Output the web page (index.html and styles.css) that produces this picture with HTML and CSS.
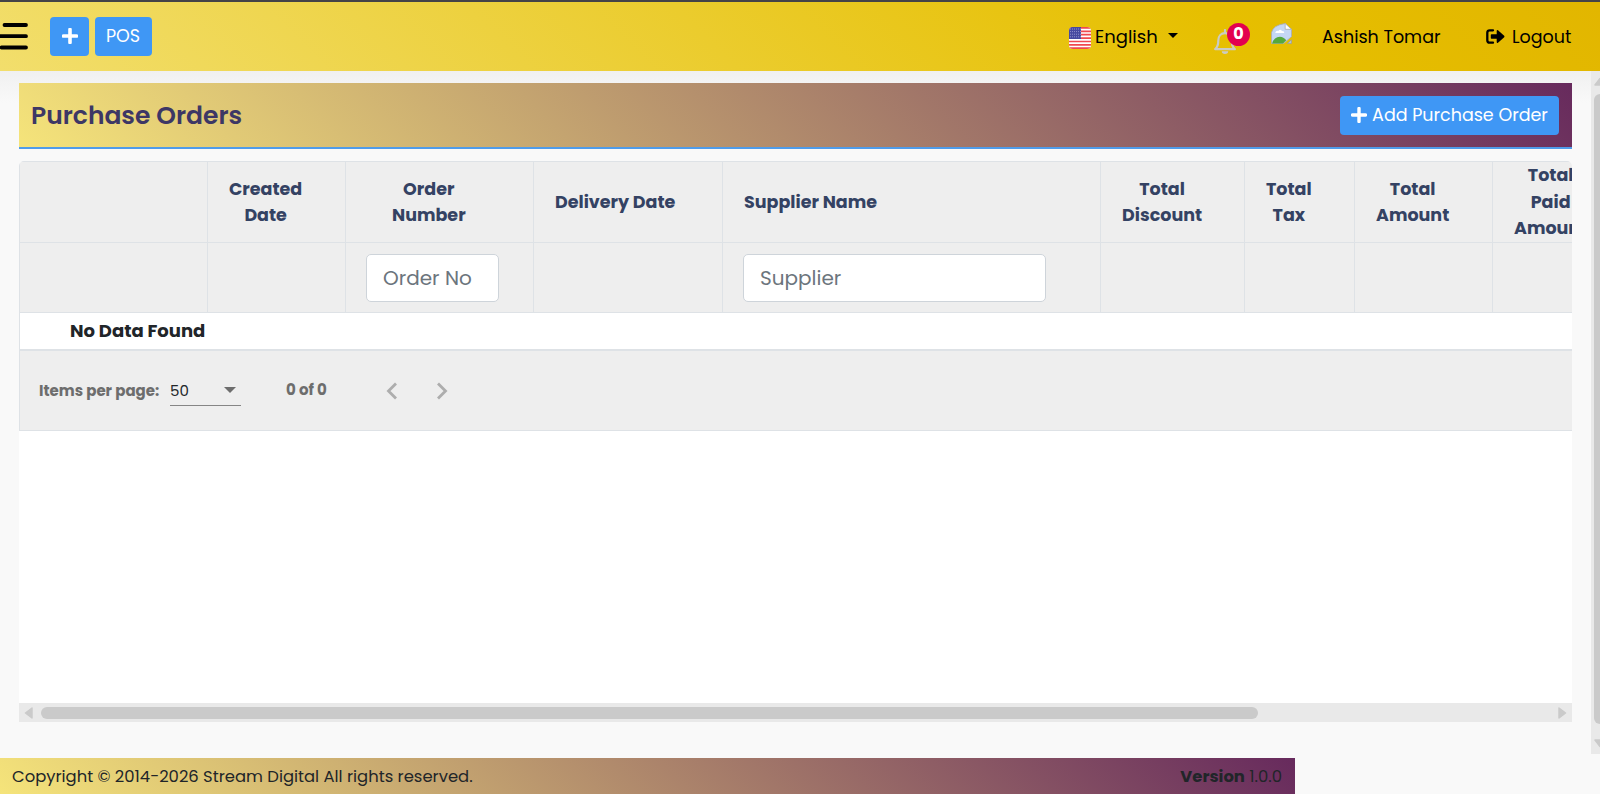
FILE: index.html
```html
<!DOCTYPE html>
<html lang="en">
<head>
  <meta charset="utf-8">
  <title>Purchase Orders</title>
  <link rel="stylesheet" href="styles.css">
</head>
<body>

  <header class="navbar">
    <svg class="menu-toggle" viewBox="0 0 28 28" width="28" height="28">
      <path d="M4.5 2H26M-2 13.2H26M1.5 24.5H26" stroke="#000" stroke-width="3.8" stroke-linecap="round"/>
    </svg>
    <button class="btn btn-plus">
      <svg viewBox="0 0 16 16" width="16" height="16"><path d="M8 1.5v13M1.5 8h13" stroke="#fff" stroke-width="3.6" stroke-linecap="round"/></svg>
    </button>
    <button class="btn btn-pos">POS</button>

    <div class="nav-right">
      <a class="language">
        <svg class="flag" viewBox="0 0 22 22" width="22" height="22">
          <rect width="22" height="22" fill="#fff"/>
          <path d="M0 .9h22M0 4.3h22M0 7.7h22M0 11.1h22M0 14.5h22M0 17.9h22M0 21.2h22" stroke="#f0494f" stroke-width="1.7"/>
          <rect width="12" height="12" fill="#4649a0"/>
          <path d="M1 2h11M1 4.6h11M1 7.2h11M1 9.8h11" stroke="#9a9bd0" stroke-width=".9" stroke-dasharray="1 1"/>
        </svg>
        <span class="language-name">English</span>
        <span class="caret"></span>
      </a>
      <a class="bell">
        <svg viewBox="0 0 22 26" width="22" height="26">
          <path d="M1.2 20.2C4 17.8 4.3 15.5 4.3 11.5 4.3 7.2 7 4.2 11 4.2s6.7 3 6.7 7.3c0 4 .3 6.3 3.1 8.7z" fill="none" stroke="#cbcbc3" stroke-width="2.2" stroke-linejoin="round"/>
          <path d="M11 1v3" stroke="#cbcbc3" stroke-width="2.2" stroke-linecap="round"/>
          <path d="M7.8 22.3h6.4a3.2 2.7 0 0 1-6.4 0z" fill="#cbcbc3"/>
        </svg>
        <span class="badge">0</span>
      </a>
      <svg class="avatar" viewBox="0 0 20 20" width="21" height="21">
        <path d="M.5 19.5V9Q2 2 13.5.5l6 5.5v7L12 19.5z" fill="#c5d7f5" stroke="#a9adb5" stroke-width=".8"/>
        <path d="M4 9.5q.5-2.5 3-2 1.5-2 3.5 0 2.5 0 2 2z" fill="#fff"/>
        <path d="M1 19.5q2-6.5 7.5-6.5 3.5 0 6 3.5l-3 3z" fill="#56a83c"/>
        <path d="M13.5.5v5.5h6z" fill="#fff" stroke="#a9adb5" stroke-width=".8"/>
        <path d="M15.5 19.5l4-3.5v3.5z" fill="#b9c4cf" stroke="#999" stroke-width=".6"/>
      </svg>
      <a class="user-name">Ashish Tomar</a>
      <a class="logout">
        <svg viewBox="0 0 19 15" width="19" height="15">
          <path d="M7 1.3H3.8Q1.3 1.3 1.3 3.8v7.4q0 2.5 2.5 2.5H7" fill="none" stroke="#000" stroke-width="2.3" stroke-linecap="round"/>
          <path d="M5.5 5.2h5.2V1.7q.3-1 1.3-.4l6.2 5.5q.6.7 0 1.400L12 13.700q-1 .6-1.300-.4V9.800H5.500q-.7 0-.7-.7V5.900q0-.7.7-.7z"/>
        </svg>
        <span class="logout-text">Logout</span>
      </a>
    </div>
  </header>

  <div class="page">
    <main class="content">
      <div class="page-header">
        <h1>Purchase Orders</h1>
        <button class="btn btn-add">
          <svg viewBox="0 0 16 16" width="16" height="16"><path d="M8 1.5v13M1.5 8h13" stroke="#fff" stroke-width="3.4" stroke-linecap="round"/></svg>
          <span>Add Purchase Order</span>
        </button>
      </div>

      <div class="table-container">
        <div class="table">
          <div class="row head">
            <div class="cell"></div>
            <div class="cell"><span>Created<br>Date</span></div>
            <div class="cell cell-order"><span>Order<br>Number</span></div>
            <div class="cell"><span>Delivery Date</span></div>
            <div class="cell"><span>Supplier Name</span></div>
            <div class="cell"><span>Total<br>Discount</span></div>
            <div class="cell"><span>Total<br>Tax</span></div>
            <div class="cell"><span>Total<br>Amount</span></div>
            <div class="cell"><span>Total<br>Paid<br>Amount</span></div>
          </div>
          <div class="row filter">
            <div class="cell"></div>
            <div class="cell"></div>
            <div class="cell"><input type="text" placeholder="Order No"></div>
            <div class="cell"></div>
            <div class="cell"><input type="text" placeholder="Supplier"></div>
            <div class="cell"></div>
            <div class="cell"></div>
            <div class="cell"></div>
            <div class="cell"></div>
          </div>
          <div class="no-data"><span>No Data Found</span></div>
          <div class="paginator">
            <span class="items-label">Items per page:</span>
            <div class="page-size"><span>50</span><i class="size-arrow"></i></div>
            <span class="range">0 of 0</span>
            <svg class="arrow" viewBox="0 0 12 18" width="12" height="18"><path d="M10 1.5L2.5 9l7.5 7.5" fill="none" stroke="#adadad" stroke-width="2.8"/></svg>
            <svg class="arrow" viewBox="0 0 12 18" width="12" height="18"><path d="M2 1.5L9.5 9 2 16.5" fill="none" stroke="#adadad" stroke-width="2.8"/></svg>
          </div>
        </div>
      </div>

      <div class="scroll-x">
        <svg viewBox="0 0 9 12" width="9" height="12"><path d="M8 1v10L1.5 6z" fill="#cacaca" stroke="#cacaca" stroke-width="1.5" stroke-linejoin="round"/></svg>
        <div class="thumb-x"></div>
        <svg viewBox="0 0 9 12" width="9" height="12"><path d="M1 1v10l6.5-5z" fill="#cacaca" stroke="#cacaca" stroke-width="1.5" stroke-linejoin="round"/></svg>
      </div>
    </main>

    <div class="scroll-y">
      <svg viewBox="0 0 12 9" width="12" height="9"><path d="M1 8h10L6 1.5z" fill="#cacaca" stroke="#cacaca" stroke-width="1.5" stroke-linejoin="round"/></svg>
      <div class="thumb-y"></div>
      <svg viewBox="0 0 12 9" width="12" height="9"><path d="M1 1h10L6 7.5z" fill="#cacaca" stroke="#cacaca" stroke-width="1.5" stroke-linejoin="round"/></svg>
    </div>
  </div>

  <footer class="footer">
    <span class="copyright">Copyright © 2014-2026 Stream Digital All rights reserved.</span>
    <span class="version"><b>Version</b> 1.0.0</span>
  </footer>

</body>
</html>
```

FILE: styles.css
```css
* {
  box-sizing: border-box;
}

body {
  margin: 0;
  height: 794px;
  overflow: hidden;
  display: flex;
  flex-direction: column;
  background: #f9f9f9;
  color: #212529;
  font-family: Poppins, Inter, "Open Sans", sans-serif;
  font-size: 17.5px;
  white-space: nowrap;
}

svg {
  display: block;
  flex: none;
}

/* Top bar */
.navbar {
  flex: none;
  height: 71px;
  display: flex;
  align-items: center;
  border-top: 2px solid #444347;
  background: linear-gradient(45deg, #f2de6c, #e6bf00 76%, #e2b600);
  color: #000;
}

.menu-toggle {
  margin-right: 22px;
}

.btn {
  display: flex;
  align-items: center;
  justify-content: center;
  height: 39px;
  padding: 0;
  border: none;
  border-radius: 4px;
  background: #3f97f5;
  color: #fff;
  font-family: inherit;
  font-size: 17.5px;
}

.btn-plus {
  width: 39px;
  margin-right: 6px;
  padding-bottom: 2px;
}

.btn-pos {
  width: 57px;
  padding: 0 1px 2px 0;
}

.nav-right {
  display: flex;
  align-items: center;
  margin-left: auto;
  padding-right: 28px;
}

.language {
  display: flex;
  align-items: center;
  width: 145px;
  padding-top: 3px;
}

.flag {
  border-radius: 4px;
  margin-right: 4px;
}

.language-name {
  width: 73px;
  margin-top: -3px;
  font-size: 18px;
}

.caret {
  margin-top: -5px;
  border: 5px solid transparent;
  border-top-color: #000;
  border-bottom: 0;
}

.bell {
  position: relative;
  width: 57px;
  padding-top: 10px;
}

.badge {
  position: absolute;
  left: 13px;
  top: 4px;
  width: 23px;
  height: 23px;
  border-radius: 50%;
  background: #e3004f;
  color: #fff;
  font-size: 16px;
  font-weight: 700;
  line-height: 22px;
  text-align: center;
}

.avatar {
  margin: -7px 30px 0 0;
}

.user-name {
  width: 164px;
}

.logout {
  display: flex;
  align-items: center;
}

.logout-text {
  width: 60px;
  margin-left: 7px;
}

/* Page area */
.page {
  display: flex;
  justify-content: space-between;
  height: 683px;
  margin-bottom: 4px;
  background: linear-gradient(#f0f0f0, #f9f9f9 32px);
}

.content {
  width: 1553px;
  margin-left: 19px;
  padding-top: 12px;
}

.page-header {
  display: flex;
  align-items: center;
  justify-content: space-between;
  height: 66px;
  padding: 0 13px 0 12px;
  border-bottom: 2px solid #4f9cea;
  background: linear-gradient(45deg, #f5e47a, #672a5d);
}

.page-header h1 {
  margin: 1px 0 0;
  color: #3d3765;
  font-size: 25px;
  font-weight: 600;
}

.btn-add {
  width: 219px;
  gap: 5px;
}

/* Orders table */
.table-container {
  height: 542px;
  margin-top: 12px;
  overflow: hidden;
  border-radius: 5px 5px 0 0;
  background: #fff;
}

.table {
  width: 1650px;
  border: 1px solid #dee2e6;
}

.row {
  display: grid;
  grid-template-columns: 188px 138px 188px 189px 378px 144px 110px 138px 175px;
  background: #eee;
  border-bottom: 1px solid #dee2e6;
}

.cell {
  display: flex;
  align-items: center;
  padding-left: 21px;
  border-right: 1px solid #dee2e6;
}

.head {
  height: 81px;
  color: #344263;
  font-weight: 700;
  line-height: 26.5px;
  text-align: center;
}

.cell-order {
  padding-left: 46px;
}

.filter {
  height: 70px;
}

.filter .cell {
  padding-left: 20px;
}

.filter input {
  width: 133px;
  height: 48px;
  padding: 0 16px;
  border: 1px solid #ced4da;
  border-radius: 5px;
  font-family: inherit;
  font-size: 20px;
}

.filter input::placeholder {
  color: #6c757d;
}

.filter .cell:nth-child(5) input {
  width: 303px;
}

.no-data {
  height: 38px;
  padding-left: 50px;
  border-bottom: 2px solid #dee2e6;
  font-size: 18px;
  font-weight: 700;
  line-height: 35px;
}

.paginator {
  display: flex;
  align-items: center;
  height: 79px;
  padding-left: 19px;
  background: #eee;
  color: #6d6d6d;
  font-size: 15px;
}

.items-label {
  width: 131px;
  font-weight: 700;
}

.page-size {
  display: flex;
  align-items: center;
  justify-content: space-between;
  width: 71px;
  height: 31px;
  padding-right: 5px;
  border-bottom: 1px solid #858585;
  color: #212529;
}

.size-arrow {
  border: 6px solid transparent;
  border-top-color: #6d6d6d;
  border-bottom: 0;
}

.range {
  width: 100px;
  margin: -3px 0 0 45px;
  font-weight: 700;
}

.arrow {
  margin-right: 38px;
}

/* Scrollbars */
.scroll-x {
  display: flex;
  align-items: center;
  height: 19px;
  padding: 0 5px;
  background: #e9e9e9;
}

.thumb-x {
  width: 1217px;
  height: 12px;
  margin: 0 auto 0 8px;
  border-radius: 6px;
  background: #cacaca;
}

.scroll-y {
  display: flex;
  flex-direction: column;
  width: 9px;
  padding: 6px 0 6px 3px;
  overflow: hidden;
  background: #e9e9e9;
}

.thumb-y {
  width: 12px;
  height: 630px;
  margin: 8px 0 auto;
  border-radius: 6px;
  background: #cacaca;
}

/* Footer */
.footer {
  display: flex;
  align-items: center;
  justify-content: space-between;
  width: 1295px;
  height: 36px;
  padding: 1px 13px 0 12px;
  background: linear-gradient(45deg, #f5e47a, #672a5d);
  font-size: 16.4px;
}
```
